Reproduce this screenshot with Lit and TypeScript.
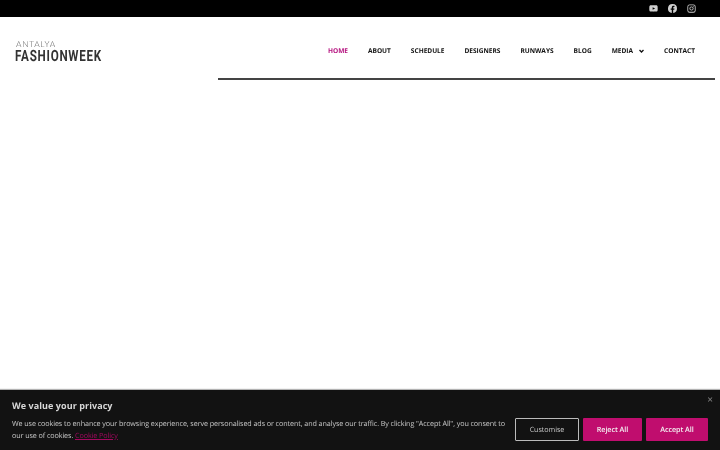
import { LitElement, html, css } from "lit";
import { customElement } from "lit/decorators.js";

@customElement("app-root")
export class AppRoot extends LitElement {
  static styles = css`
    :host { display: block; height: 450px; overflow: hidden; position: relative; background: #fff; font-family: "Open Sans", sans-serif; text-rendering: geometricPrecision; filter: blur(.3px); }
    .top { height: 17px; background: #000; display: flex; justify-content: flex-end; align-items: center; gap: 10px; padding-right: 24px; }
    .top svg { width: 9px; height: 9px; fill: #cfcfcf; display: block; }
    .header { display: flex; align-items: flex-start; height: 63px; }
    .logo { width: 218px; flex: none; padding: 24px 0 0 15px; box-sizing: border-box; }
    .l1 { font-family: Lato, sans-serif; font-weight: 300; font-size: 8.3px; line-height: 7px; letter-spacing: .75px; color: #555; padding-left: 1px; }
    .l2 { font-family: "Roboto", sans-serif; font-weight: 700; font-size: 15.5px; line-height: 13px; letter-spacing: 1px; transform: scaleX(.75); transform-origin: left; white-space: nowrap; color: #333; margin-top: 2px; }
    .navwrap { width: 497px; flex: none; border-bottom: 2px solid #444; height: 61px; }
    nav { display: flex; justify-content: flex-end; padding: 29px 20px 0 0; gap: 20px; font-size: 6.55px; font-weight: 700; line-height: 10px; color: #111; }
    nav span { white-space: nowrap; display: flex; align-items: center; gap: 6px; }
    nav .on { color: #b5127f; }
    nav svg { width: 5px; height: 4px; }
    .banner { position: absolute; left: 0; right: 0; bottom: 0; height: 60px; background: #121212; color: #c8c8c8; box-shadow: 0 -1px 1px rgba(0,0,0,.3); display: flex; align-items: flex-end; padding: 0 12px 8px 12px; box-sizing: border-box; }
    .text { flex: 1; }
    h2 { margin: 0 0 6px; font-size: 9px; line-height: 13px; font-weight: 700; color: #d8d8d8; letter-spacing: .07px; }
    p { margin: 0; font-size: 7.2px; letter-spacing: -.09px; line-height: 12px; width: 498px; }
    p a { color: #a3095f; text-decoration: underline; }
    .btns { display: flex; gap: 4px; margin-bottom: 1px; }
    button { font-family: inherit; font-size: 7.2px; letter-spacing: -.05px; font-weight: 600; height: 23px; padding: 0; border-radius: 1px; border: 0; background: #c00d6e; color: #f3f3f3; text-rendering: geometricPrecision; }
    .c { width: 64px; background: transparent; border: 1.5px solid #bbb; color: #c8c8c8; font-weight: 400; }
    .r { width: 59px; }
    .a { width: 62px; }
    .x { position: absolute; right: 7px; top: 4px; font-size: 10px; line-height: 10px; color: #888; }
  `;
  render() {
    return html`
      <div class="top">
        <svg viewBox="0 0 24 24"><path d="M23 7s-.2-1.700-1-2.400c-.9-1-1.900-1-2.400-1C16.200 3.300 12 3.300 12 3.300s-4.200 0-7.600.3c-.5 0-1.500 0-2.400 1C1.200 5.300 1 7 1 7S.8 9 .8 10.900v1.800C.8 14.700 1 16.700 1 16.700s.2 1.700 1 2.400c.9 1 2.100.9 2.600 1 2 .2 7.400.3 7.400.3s4.200 0 7.600-.3c.5 0 1.500 0 2.400-1 .8-.7 1-2.400 1-2.400s.2-2 .2-3.900v-1.800C23.200 9 23 7 23 7zM9.700 15.500V8.400l6.500 3.600-6.500 3.500z"/></svg>
        <svg viewBox="0 0 24 24"><path d="M24 12a12 12 0 1 0-13.900 11.900v-8.400H7.100V12h3V9.400c0-3 1.800-4.700 4.500-4.700 1.300 0 2.700.2 2.700.2v3h-1.500c-1.500 0-2 .9-2 1.900V12h3.400l-.5 3.500h-2.900v8.400A12 12 0 0 0 24 12z"/></svg>
        <svg viewBox="0 0 24 24"><path fill-rule="evenodd" d="M7 1h10a6 6 0 0 1 6 6v10a6 6 0 0 1-6 6H7a6 6 0 0 1-6-6V7a6 6 0 0 1 6-6zm0 2.200A3.800 3.800 0 0 0 3.200 7v10A3.800 3.800 0 0 0 7 20.800h10a3.800 3.800 0 0 0 3.800-3.800V7A3.800 3.800 0 0 0 17 3.200H7zM12 6.400a5.600 5.600 0 1 1 0 11.200 5.600 5.600 0 0 1 0-11.200zm0 2.200a3.400 3.400 0 1 0 0 6.800 3.400 3.400 0 0 0 0-6.800zm5.800-3.700a1.300 1.300 0 1 1 0 2.600 1.300 1.300 0 0 1 0-2.600z"/></svg>
      </div>
      <div class="header">
        <div class="logo"><div class="l1">ANTALYA</div><div class="l2">FASHIONWEEK</div></div>
        <div class="navwrap">
          <nav>
            <span class="on">HOME</span><span>ABOUT</span><span>SCHEDULE</span><span>DESIGNERS</span><span>RUNWAYS</span><span>BLOG</span>
            <span>MEDIA <svg viewBox="0 0 10 7"><path d="M1 1.500l4 4 4-4" fill="none" stroke="#111" stroke-width="2.600"/></svg></span>
            <span>CONTACT</span>
          </nav>
        </div>
      </div>
      <div class="banner">
        <div class="x">×</div>
        <div class="text">
          <h2>We value your privacy</h2>
          <p>We use cookies to enhance your browsing experience, serve personalised ads or content, and analyse our traffic. By clicking "Accept All", you consent to our use of cookies. <a>Cookie Policy</a></p>
        </div>
        <div class="btns">
          <button class="c">Customise</button><button class="r">Reject All</button><button class="a">Accept All</button>
        </div>
      </div>
    `;
  }
}
